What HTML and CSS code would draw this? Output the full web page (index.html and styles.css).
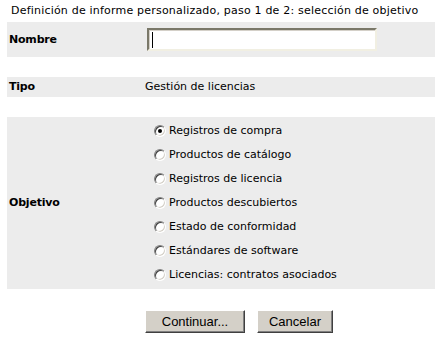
FILE: index.html
```html
<!DOCTYPE html>
<html lang="es">
<head>
    <meta charset="UTF-8">
    <title>Definición de informe personalizado</title>
    <link rel="stylesheet" href="styles.css">
</head>
<body>
    <div class="page-title">Definición de informe personalizado, paso 1 de 2: selección de objetivo</div>

    <form class="report-form">
        <div class="row row-name">
            <label class="row-label" for="name">Nombre</label>
            <div class="row-value">
                <span class="field-wrap"><input type="text" id="name" class="text-field"></span>
            </div>
        </div>

        <div class="row row-type">
            <div class="row-label">Tipo</div>
            <div class="row-value">Gestión de licencias</div>
        </div>

        <div class="row row-target">
            <div class="row-label">Objetivo</div>
            <div class="row-value option-list">
                <label class="option"><input type="radio" name="target" checked> Registros de compra</label>
                <label class="option"><input type="radio" name="target"> Productos de catálogo</label>
                <label class="option"><input type="radio" name="target"> Registros de licencia</label>
                <label class="option"><input type="radio" name="target"> Productos descubiertos</label>
                <label class="option"><input type="radio" name="target"> Estado de conformidad</label>
                <label class="option"><input type="radio" name="target"> Estándares de software</label>
                <label class="option"><input type="radio" name="target"> Licencias: contratos asociados</label>
            </div>
        </div>

        <div class="actions">
            <button type="button" class="btn btn-continue">Continuar...</button>
            <button type="button" class="btn btn-cancel">Cancelar</button>
        </div>
    </form>
</body>
</html>
```

FILE: styles.css
```css
* {
    margin: 0;
    padding: 0;
    box-sizing: border-box;
}

body {
    font-family: "DejaVu Sans", Verdana, sans-serif;
    font-size: 11px;
    line-height: 14px;
    color: #000;
    background: #fff;
    padding: 4px 1px 0 7px;
}

.page-title {
    padding-left: 4px;
    height: 18px;
    letter-spacing: 0.2px;
}

.row {
    display: grid;
    grid-template-columns: 138px 1fr;
    align-items: center;
    background: #ececec;
}

.row-label {
    font-weight: bold;
    padding-left: 2px;
    letter-spacing: -0.2px;
}

.row-name {
    height: 35px;
}

.row-type {
    height: 20px;
    margin-top: 20px;
}

.row-target {
    margin-top: 20px;
    padding: 2px 0;
}

.field-wrap {
    position: relative;
    display: inline-block;
    margin-left: 2px;
}

.field-wrap::after {
    content: "";
    position: absolute;
    left: 5px;
    top: 4px;
    width: 1px;
    height: 16px;
    background: #000;
}

.text-field {
    display: block;
    width: 230px;
    height: 23px;
    border: 2px solid;
    border-color: #7a7869 #f1efe2 #f1efe2 #7a7869;
    box-shadow: inset 1px 1px 0 #d4d0c8;
    background: #fff;
    outline: none;
    font: inherit;
}

.option-list {
    display: flex;
    flex-direction: column;
}

.option {
    display: flex;
    align-items: center;
    height: 24px;
    padding-left: 9px;
}

.option input {
    appearance: none;
    -webkit-appearance: none;
    width: 12px;
    height: 12px;
    margin-right: 3px;
    border-radius: 50%;
    border: 1px solid;
    border-color: #808080 #fff #fff #808080;
    box-shadow: inset 1px 1px 0 #404040, inset -1px -1px 0 #d4d0c8;
    background: #fff;
    position: relative;
}

.option input:checked::after {
    content: "";
    position: absolute;
    left: 3px;
    top: 3px;
    width: 4px;
    height: 4px;
    border-radius: 50%;
    background: #000;
}

.actions {
    display: flex;
    gap: 12px;
    margin-top: 21px;
    padding-left: 138px;
}

.btn {
    height: 23px;
    font-family: "Liberation Sans", Arial, sans-serif;
    font-size: 13px;
    color: #000;
    background: #d4d0c8;
    border: 1px solid;
    border-color: #fff #404040 #404040 #fff;
    box-shadow: inset -1px -1px 0 #808080;
}

.btn-continue {
    width: 100px;
}

.btn-cancel {
    width: 76px;
}
```
